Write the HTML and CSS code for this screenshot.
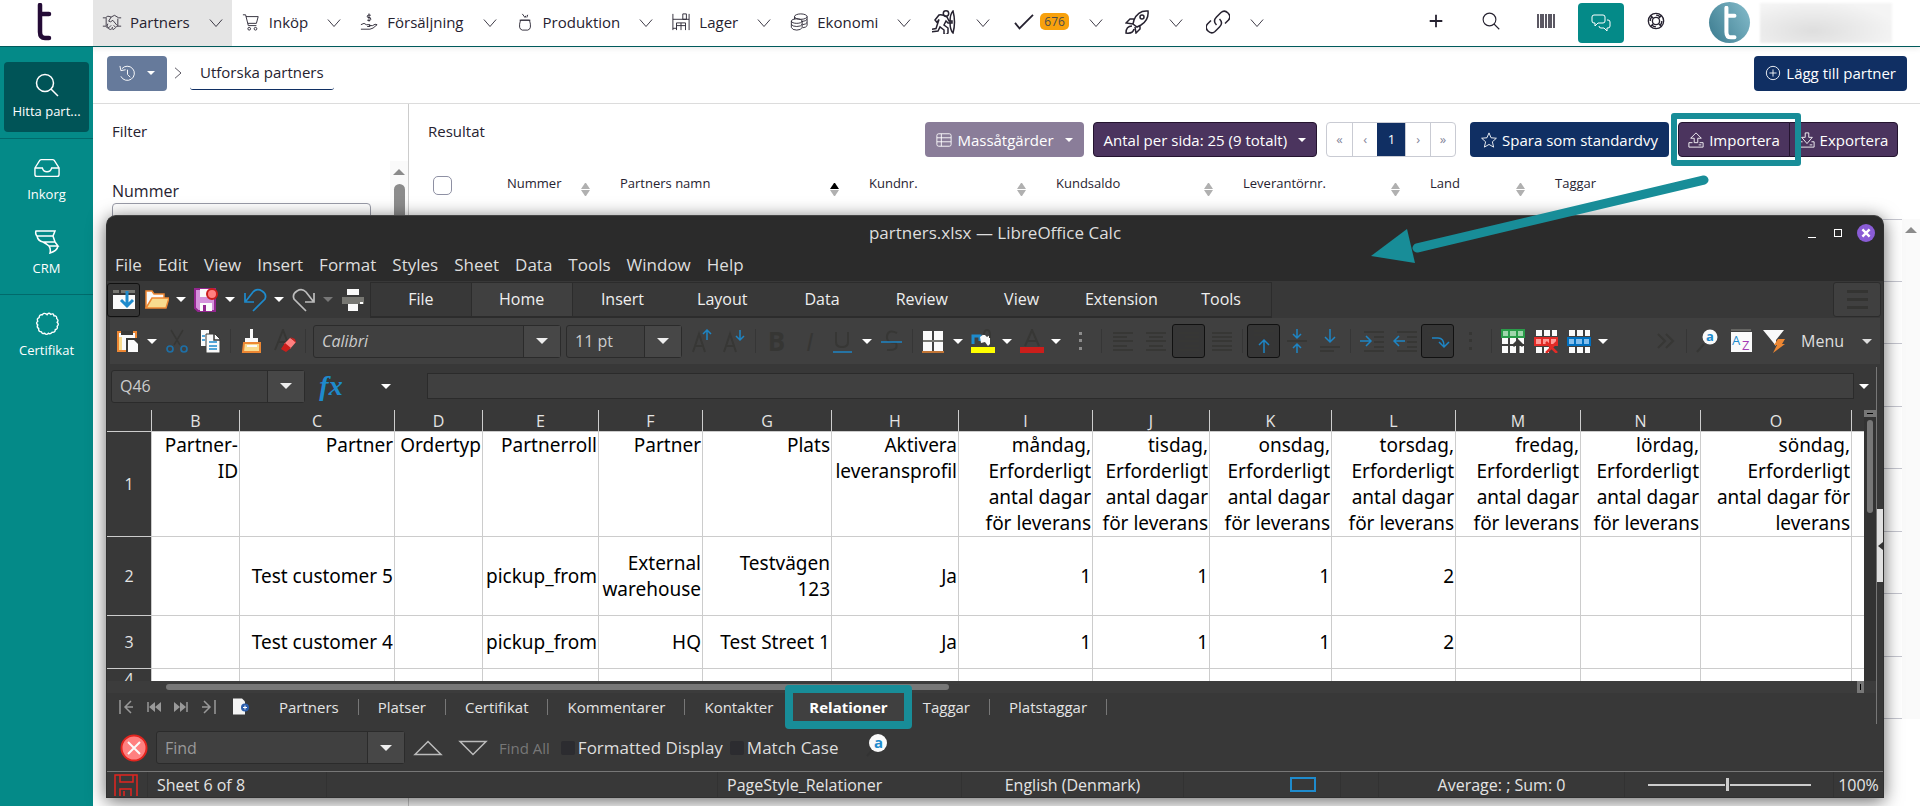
FILE: index.html
```html
<!DOCTYPE html>
<html lang="sv">
<head>
    <meta charset="utf-8">
    <title>Utforska partners</title>
    <link rel="stylesheet" href="styles.css">
</head>
<body>

<!-- icon sprite -->
<svg class="sprite" aria-hidden="true">
    <symbol id="chev" viewBox="0 0 16 16"><path d="M1 4l7 8 7-8"/></symbol>
    <symbol id="logo-t" viewBox="0 0 16 38"><path d="M4 2v27q0 6 5 6h4M4 11h9" stroke-width="4.500" stroke-linecap="round"/></symbol>
    <symbol id="handshake" viewBox="0 0 24 20"><path d="M1 5h3l3-2 4 1 4-2 5 3h3M1 15h3l4 3 2 1 2-1 2 1 2-2 2-2h5M5 5v10M19 6v9M11 4L8 9q2 2 5-1l5 6M14 14l2 2M12 16l1 1.500M7 12l-1 3 2 2 3-3"/></symbol>
    <symbol id="cart" viewBox="0 0 20 20"><path d="M1 2h3l3 12h9M4.500 4H18l-2 7.500H6.500"/><circle cx="8" cy="17.500" r="1.500"/><circle cx="15" cy="17.500" r="1.500"/></symbol>
    <symbol id="hand" viewBox="0 0 20 20"><path d="M1 18h10q3 0 8-5-2-1.500-5 1h-4M1 13q4-3 6 0h4v2H8M12 2.500q-4-1-4 1t2 1.500 2 2-4 1M10 .500v9"/></symbol>
    <symbol id="kettle" viewBox="0 0 20 20"><path d="M5 8q-3 10 2 11h6q5-1 2-11zM4 8h12M7 1l3 4 1-2M13 2l-1 3"/></symbol>
    <symbol id="store" viewBox="0 0 20 20"><path d="M1 1v18M19 1v18M1 7h18M12 1h4v6h-4zM5 19v-8h5v8M10 11h5v8M1 17h4M5 14h10"/></symbol>
    <symbol id="coins" viewBox="0 0 20 20"><ellipse cx="12" cy="4" rx="7" ry="3"/><path d="M5 4v3M19 4v10q-1 2-5 2.500M19 7q-1 2-6 2.500M19 10.500q-1 2-5 2.500"/><ellipse cx="7.500" cy="9" rx="6" ry="2.500"/><path d="M1.500 9v7q1 3 6 3t6-3V9M1.500 12.500q1 2.500 6 2.500t6-2.500"/></symbol>
    <symbol id="hiker" viewBox="0 0 24 24"><circle cx="14" cy="3.500" r="2.700"/><path d="M3 10l4-5q3-1 8 2l2 4h3v2h-4l-2-2-2 4 4 3v5l-2 2-2-1v-4l-4-3-2 4-7 1v-2.500l5-1 3-9-2 3zM21 1q3 11 0 22-3-3-3-11t3-11z"/></symbol>
    <symbol id="check" viewBox="0 0 24 20"><path d="M2 11l5 6L22 2" stroke-width="2"/></symbol>
    <symbol id="rocket" viewBox="0 0 24 24"><path d="M23 1q-10-1-14 9l-1 4 4 3 4-2q8-5 7-14zM9 9H5l-4 4 7 1M15 16v3l-4 4-1-6M7 16q-6 0-6 7 7 1 8-4"/><circle cx="17" cy="7" r="2"/></symbol>
    <symbol id="link" viewBox="0 0 24 24"><path d="M10.500 15q-4-4 0-8l4.500-4.500q3.500-3 7 .500t.500 7l-3.500 3.500M13.500 9q4 4 0 8L9 21.500q-3.500 3-7-.500t-.500-7L5 10.500"/></symbol>
    <symbol id="plus" viewBox="0 0 20 20"><path d="M10 3v14M3 10h14" stroke-width="2"/></symbol>
    <symbol id="search" viewBox="0 0 24 24"><circle cx="10" cy="10" r="8.500"/><path d="M16 16l7 7"/></symbol>
    <symbol id="barcode" viewBox="0 0 18 14"><path d="M1 0v14M4 0v14M6 0v14M9 0v14M12 0v14M14 0v14M17 0v14"/></symbol>
    <symbol id="chat" viewBox="0 0 20 20"><path d="M3 2h9q2 0 2 2v4q0 2-2 2H7l-3 3v-3H3q-2 0-2-2V4q0-2 2-2zM16 7h1q2 0 2 2v4q0 2-2 2h-1v3l-3-3h-3q-2 0-2-2"/></symbol>
    <symbol id="buoy" viewBox="0 0 20 20"><circle cx="10" cy="10" r="8.500"/><circle cx="10" cy="10" r="4"/><circle cx="10" cy="10" r="6.500" stroke-dasharray="5 5"/><path d="M4 4l3 3M16 4l-3 3M4 16l3-3M16 16l-3-3"/></symbol>
    <symbol id="inbox" viewBox="0 0 28 20"><path d="M1 10l5-8q1-1 2-1h12q1 0 2 1l5 8v7q0 2-2 2H3q-2 0-2-2zM1 10h8q1 4 5 4t5-4h8"/></symbol>
    <symbol id="crm" viewBox="0 0 24 24"><path d="M1 1h19l-2 5H2q-2-2-1-5zM2 6q1 5 6 6h12l-2-6M8 12q4 2 6 4h9l-3-4M14 16q2 3 1 7 7-2 8-7"/></symbol>
    <symbol id="badge" viewBox="0 0 26 26"><path d="M13 3q2-3 4-.500 3-1.500 3.500 1.500 3.500 0 3 3 2.500 2 .500 4 2.500 2.500 0 4.500 1 3-2 3.500 0 3.500-3.500 3-2 2.500-4 1-2 2.500-4 0-3 1-3.500-1.500-3.500 0-3-3.500-2.500-1.500-1-4-2.500-2 0-4-1.500-3 1.500-4 0-3.500 3.500-3 1.500-2.500 4-1z"/></symbol>
    <symbol id="history" viewBox="0 0 18 18"><path d="M3 4a7.500 7.500 0 1 1-1 8M1 1l1 5 5-1M9 5v5l3 3"/></symbol>
    <symbol id="grid" viewBox="0 0 18 16"><rect x="1" y="1" width="16" height="14" rx="2"/><path d="M1 5.500h16M1 10h16M6 1v14"/></symbol>
    <symbol id="star" viewBox="0 0 18 18"><path d="M9 1l2.300 5.500 6 .500-4.500 4 1.400 6L9 14l-5.200 3 1.400-6L.700 7l6-.500z"/></symbol>
    <symbol id="upload" viewBox="0 0 18 18"><path d="M7 12V7H3l6-6 6 6h-4v5zM5 12H1v5h16v-5h-4M12 14.500h3"/></symbol>
    <symbol id="download" viewBox="0 0 18 18"><path d="M7 1v5H3l6 7 6-7h-4V1zM4 11H1v6h16v-6h-3M12 14.500h3"/></symbol>
    <symbol id="pluscircle" viewBox="0 0 18 18"><circle cx="9" cy="9" r="7.500"/><path d="M9 5v8M5 9h8"/></symbol>
</svg>

<header class="topbar">
    <a href="#" class="logo" aria-label="Start"><svg><use href="#logo-t"/></svg></a>
    <nav class="topnav">
        <a href="#" class="active"><svg><use href="#handshake"/></svg>Partners<svg class="chev"><use href="#chev"/></svg></a>
        <a href="#"><svg><use href="#cart"/></svg>Inköp<svg class="chev"><use href="#chev"/></svg></a>
        <a href="#"><svg><use href="#hand"/></svg>Försäljning<svg class="chev"><use href="#chev"/></svg></a>
        <a href="#"><svg><use href="#kettle"/></svg>Produktion<svg class="chev"><use href="#chev"/></svg></a>
        <a href="#"><svg><use href="#store"/></svg>Lager<svg class="chev"><use href="#chev"/></svg></a>
        <a href="#"><svg><use href="#coins"/></svg>Ekonomi<svg class="chev"><use href="#chev"/></svg></a>
        <a href="#" class="icon-only" aria-label="Aktiviteter"><svg><use href="#hiker"/></svg><svg class="chev"><use href="#chev"/></svg></a>
        <a href="#" class="tasks"><svg><use href="#check"/></svg><span class="count">676</span><svg class="chev"><use href="#chev"/></svg></a>
        <a href="#" class="icon-only" aria-label="Projekt"><svg><use href="#rocket"/></svg><svg class="chev"><use href="#chev"/></svg></a>
        <a href="#" class="icon-only" aria-label="Länkar"><svg><use href="#link"/></svg><svg class="chev"><use href="#chev"/></svg></a>
    </nav>
    <div class="topicons">
        <button aria-label="Ny"><svg><use href="#plus"/></svg></button>
        <button aria-label="Sök"><svg><use href="#search"/></svg></button>
        <button aria-label="Streckkod"><svg><use href="#barcode"/></svg></button>
        <button class="chat" aria-label="Chatt"><svg><use href="#chat"/></svg></button>
        <button aria-label="Hjälp"><svg><use href="#buoy"/></svg></button>
    </div>
    <div class="user">
        <span class="avatar"><svg><use href="#logo-t"/></svg></span>
        <span class="username"></span>
    </div>
</header>

<div class="app">
    <aside class="sidebar">
        <div class="sidegroup">
            <a href="#" class="current"><svg><use href="#search"/></svg>Hitta part...</a>
        </div>
        <div class="sidegroup">
            <a href="#"><svg><use href="#inbox"/></svg>Inkorg</a>
            <a href="#"><svg><use href="#crm"/></svg>CRM</a>
        </div>
        <div class="sidegroup">
            <a href="#"><svg><use href="#badge"/></svg>Certifikat</a>
        </div>
    </aside>

    <main class="main">
        <div class="crumbs">
            <button class="btn history" aria-label="Historik"><svg><use href="#history"/></svg><i class="caret"></i></button>
            <svg class="sep"><use href="#chev"/></svg>
            <a href="#" class="crumb">Utforska partners</a>
            <button class="btn navy add"><svg><use href="#pluscircle"/></svg>Lägg till partner</button>
        </div>

        <div class="columns">
            <section class="filter">
                <h2>Filter</h2>
                <div class="filterbody">
                    <div class="field">
                        <label for="nummer">Nummer</label>
                        <input id="nummer" type="text">
                    </div>
                    <div class="track"><i class="arrowup"></i><i class="thumb"></i></div>
                </div>
            </section>

            <section class="result">
                <div class="resulthead">
                    <h2>Resultat</h2>
                    <div class="actions">
                        <button class="btn mass"><svg><use href="#grid"/></svg>Massåtgärder<i class="caret"></i></button>
                        <button class="btn purple">Antal per sida: 25 (9 totalt)<i class="caret"></i></button>
                        <div class="pages">
                            <a href="#">«</a><a href="#">‹</a><a href="#" class="on">1</a><a href="#">›</a><a href="#">»</a>
                        </div>
                        <button class="btn navy"><svg><use href="#star"/></svg>Spara som standardvy</button>
                        <div class="btngroup">
                            <button class="btn purple import"><svg><use href="#upload"/></svg>Importera</button>
                            <button class="btn purple export"><svg><use href="#download"/></svg>Exportera</button>
                        </div>
                    </div>
                </div>
                <div class="resultbody">
                    <table class="list">
                        <thead>
                            <tr>
                                <th class="c-check"><input type="checkbox" aria-label="Markera alla"></th>
                                <th class="c-num"><div>Nummer<i class="sort"></i></div></th>
                                <th class="c-name"><div>Partners namn<i class="sort up"></i></div></th>
                                <th class="c-mid"><div>Kundnr.<i class="sort"></i></div></th>
                                <th class="c-mid"><div>Kundsaldo<i class="sort"></i></div></th>
                                <th class="c-mid"><div>Leverantörnr.<i class="sort"></i></div></th>
                                <th class="c-land"><div>Land<i class="sort"></i></div></th>
                                <th><div>Taggar</div></th>
                            </tr>
                        </thead>
                        <tbody>
                            <tr><td colspan="8"></td></tr>
                            <tr><td colspan="8"></td></tr>
                            <tr><td colspan="8"></td></tr>
                            <tr><td colspan="8"></td></tr>
                            <tr><td colspan="8"></td></tr>
                            <tr><td colspan="8"></td></tr>
                            <tr><td colspan="8"></td></tr>
                            <tr><td colspan="8"></td></tr>
                        </tbody>
                    </table>
                    <div class="track outer"><i class="arrowup"></i></div>
                </div>
            </section>
        </div>
    </main>
</div>

<!-- LibreOffice window on top of the page -->
<div class="calc">
    <div class="titlebar">
        <span>partners.xlsx — LibreOffice Calc</span>
        <div class="winbtns">
            <button class="min" aria-label="Minimize"></button>
            <button class="max" aria-label="Maximize"></button>
            <button class="close" aria-label="Close"><svg viewBox="0 0 10 10"><path d="M2 2l6 6M8 2l-6 6"/></svg></button>
        </div>
    </div>

    <nav class="menubar">
        <a href="#">File</a><a href="#">Edit</a><a href="#">View</a><a href="#">Insert</a><a href="#">Format</a><a href="#">Styles</a><a href="#">Sheet</a><a href="#">Data</a><a href="#">Tools</a><a href="#">Window</a><a href="#">Help</a>
    </nav>

    <div class="ribbon">
        <div class="quick">
            <button class="tool pressed" aria-label="Toolbar"><svg viewBox="0 0 24 24"><path fill="#777772" d="M1 2h6v3H1zM9 2h14v3H9z"/><path fill="#fafafa" d="M1 7h22v14H1z"/><path d="M15 3v14M9 12l6 6 6-6" stroke="#1e8bcd" stroke-width="3" fill="none"/></svg></button>
            <button class="tool" aria-label="Open"><svg viewBox="0 0 24 24"><path fill="#fafafa" stroke="#ed8733" stroke-width="1.500" d="M1 20V3h6l2 3h10v4"/><path fill="#f8db8f" stroke="#ed8733" stroke-width="1.500" d="M1 20l6-10h17l-3 10z"/></svg></button>
            <button class="drop" aria-label="Open menu"><i class="caret"></i></button>
            <button class="tool" aria-label="Save"><svg viewBox="0 0 24 24"><path fill="#d492db" stroke="#92278f" stroke-width="2" d="M1 1h20v22H4l-3-3z"/><path fill="#fafafa" d="M6 1h10v8H6zM6 15h12v8H6z"/><path fill="#92278f" d="M9 17h3v6H9z"/><circle cx="18" cy="6" r="5" fill="#ff8080" stroke="#cb1e1b" stroke-width="2"/></svg></button>
            <button class="drop" aria-label="Save menu"><i class="caret"></i></button>
            <button class="tool" aria-label="Undo"><svg viewBox="0 0 24 24"><path fill="none" stroke="#1e8bcd" stroke-width="1.700" d="M2 5v9h9M3 13L10 4q4-4 9-1t3 8L10 23"/></svg></button>
            <button class="drop" aria-label="Undo menu"><i class="caret"></i></button>
            <button class="tool" aria-label="Redo"><svg viewBox="0 0 24 24"><path fill="none" stroke="#bdbdbd" stroke-width="1.700" d="M22 5v9h-9M21 13L14 4q-4-4-9-1t-3 8l12 12"/></svg></button>
            <button class="drop" aria-label="Redo menu"><i class="caret dim"></i></button>
            <button class="tool" aria-label="Print"><svg viewBox="0 0 24 24"><path fill="#fafafa" d="M6 1h12v6H6zM7 16h10v7H7z"/><path fill="#777772" d="M1 9h22v7H1z"/><path fill="#fff" d="M19 14h3v2h-3z"/></svg></button>
        </div>
        <div class="tabs">
            <button>File</button><button class="on">Home</button><button>Insert</button><button>Layout</button><button>Data</button><button>Review</button><button>View</button><button>Extension</button><button>Tools</button>
        </div>
        <button class="burger" aria-label="Menu"><i></i><i></i><i></i></button>
    </div>

    <div class="toolbar">
        <button class="tool" aria-label="Paste"><svg viewBox="0 0 24 24"><path fill="#fafafa" stroke="#ed8733" stroke-width="2" d="M2 3h18v19H2z"/><path fill="#f8db8f" d="M3 8h3v13H3z"/><path fill="#3a3a38" d="M5 2h12v4H5zM10 9h14v14H10z"/><path fill="#fafafa" d="M12 11h6l4 4v8H12z"/></svg></button>
        <button class="drop" aria-label="Paste menu"><i class="caret"></i></button>
        <button class="tool" aria-label="Cut"><svg viewBox="0 0 24 24"><path fill="none" stroke="#363634" stroke-width="1.500" d="M6 1l9 15M18 1L9 16"/><circle cx="5" cy="20" r="3" fill="none" stroke="#1e6fa5" stroke-width="1.700"/><circle cx="19" cy="20" r="3" fill="none" stroke="#1e6fa5" stroke-width="1.700"/></svg></button>
        <button class="tool" aria-label="Copy"><svg viewBox="0 0 24 24"><path fill="#fafafa" d="M3 1h8v16H3z"/><path fill="#fafafa" stroke="#3a3a38" d="M8 5h9l5 5v14H8z"/><path stroke="#1e8bcd" stroke-width="1.500" d="M4 7h3M4 11h3M11 13h8M11 17h8M11 20h8"/><path fill="none" stroke="#3a3a38" stroke-width="1.500" d="M16 5v6h6"/></svg></button>
        <i class="bar"></i>
        <button class="tool" aria-label="Clone formatting"><svg viewBox="0 0 24 24"><path fill="#fafafa" d="M10 0h3v9h5v4H5V9h5z"/><path fill="#f8db8f" stroke="#ed8733" stroke-width="2" d="M4 14h16v9H3z"/><path stroke="#fafafa" stroke-width="2" d="M7 17h10"/></svg></button>
        <button class="tool" aria-label="Clear formatting"><svg viewBox="0 0 24 24"><path fill="none" stroke="#363634" stroke-width="2" d="M2 21L10 1l6 16M5 13h8"/><path fill="#ff8080" d="M17 9l6 4-6 7-6-5z"/><path fill="#cb1e1b" d="M12 14l6 5-5 4-5-3zM17 8l5 2 1 4z"/></svg></button>
        <i class="bar"></i>
        <div class="combo font"><input type="text" value="Calibri" aria-label="Font name"><button aria-label="Fonts"><i class="caret"></i></button></div>
        <div class="combo size"><input type="text" value="11 pt" aria-label="Font size"><button aria-label="Sizes"><i class="caret"></i></button></div>
        <button class="tool" aria-label="Increase size"><svg viewBox="0 0 24 24"><path class="off" d="M3 23L9 5l6 18M5 17h9"/><path class="blue" d="M17 11V1M13 5l4-4 4 4"/></svg></button>
        <button class="tool" aria-label="Decrease size"><svg viewBox="0 0 24 24"><path class="off" d="M1 23L7 5l6 18M3 17h9"/><path class="blue" d="M17 1v10M13 7l4 4 4-4"/></svg></button>
        <i class="bar"></i>
        <button class="tool glyph"><b>B</b></button>
        <button class="tool glyph"><em>I</em></button>
        <button class="tool" aria-label="Underline"><svg viewBox="0 0 24 24"><path class="off" d="M5 3v10q0 5 6 5t6-5V3"/><path class="blue" d="M2 23h19" /></svg></button>
        <button class="drop" aria-label="Underline menu"><i class="caret"></i></button>
        <button class="tool" aria-label="Strikethrough"><svg viewBox="0 0 24 24"><path class="off" d="M17 4q-9-4-10 3t9 7q3 8-9 7"/><path class="blue" d="M1 13h21"/></svg></button>
        <i class="bar"></i>
        <button class="tool" aria-label="Borders"><svg viewBox="0 0 24 24"><path fill="#fafafa" d="M1 2h9v9H1zM12 2h9v9h-9zM1 13h9v9H1zM12 13h9v9h-9z"/><path stroke="#777772" stroke-width="2" d="M1 12h20"/><path stroke="#ed8733" stroke-width="1.500" d="M0 23h22"/></svg></button>
        <button class="drop" aria-label="Borders menu"><i class="caret"></i></button>
        <button class="tool" aria-label="Background"><svg viewBox="0 0 24 24"><path fill="none" stroke="#1e8bcd" stroke-width="3" d="M2 15V7h7v5"/><path fill="#fafafa" d="M9 8l4-3 3 3 3-2v9l-2 2-3-4-4 1z"/><path class="off" d="M13 6q0-5 3-5t3 5v3"/><path fill="#ff0" d="M0 18h24v6H0z"/></svg></button>
        <button class="drop" aria-label="Background menu"><i class="caret"></i></button>
        <button class="tool" aria-label="Font color"><svg viewBox="0 0 24 24"><path class="off" d="M5 17L12 1l7 16M7 12h10"/><path fill="#cb1e1b" d="M0 18h24v6H0z"/></svg></button>
        <button class="drop" aria-label="Font color menu"><i class="caret"></i></button>
        <button class="tool" aria-label="More"><svg viewBox="0 0 24 24"><path fill="#8c8c8c" d="M10 3h3v3h-3zM10 10h3v3h-3zM10 18h3v3h-3z"/></svg></button>
        <i class="bar"></i>
        <button class="tool" aria-label="Left"><svg viewBox="0 0 24 24"><path class="off" d="M2 4h20M2 8h14M2 12h20M2 17h14M2 21h20"/></svg></button>
        <button class="tool" aria-label="Center"><svg viewBox="0 0 24 24"><path class="off" d="M2 4h20M5 8h14M2 12h20M5 17h14M2 21h20"/></svg></button>
        <button class="tool pressed" aria-label="Right"><svg viewBox="0 0 24 24"><path class="off" d="M2 4h20M8 8h14M2 12h20M8 17h14M2 21h20"/></svg></button>
        <button class="tool" aria-label="Justify"><svg viewBox="0 0 24 24"><path class="off" d="M2 4h20M2 8h20M2 12h20M2 17h20M2 21h20"/></svg></button>
        <i class="bar"></i>
        <button class="tool pressed" aria-label="Top"><svg viewBox="0 0 24 24"><path class="off" d="M2 2h20M2 6h14"/><path class="blue" d="M12 24V11M7 16l5-5 5 5"/></svg></button>
        <button class="tool" aria-label="Middle"><svg viewBox="0 0 24 24"><path class="off" d="M2 12h20"/><path class="blue" d="M12 0v9M8 5l4 4 4-4M12 24v-9M8 19l4-4 4 4"/></svg></button>
        <button class="tool" aria-label="Bottom"><svg viewBox="0 0 24 24"><path class="off" d="M2 18h20M2 22h14"/><path class="blue" d="M12 0v13M7 8l5 5 5-5"/></svg></button>
        <i class="bar"></i>
        <button class="tool" aria-label="Indent"><svg viewBox="0 0 24 24"><path class="off" d="M4 3h20M14 8h10M14 13h10M14 18h10M4 22h20"/><path class="blue" d="M0 12h11M6 7l5 5-5 5"/></svg></button>
        <button class="tool" aria-label="Outdent"><svg viewBox="0 0 24 24"><path class="off" d="M4 3h20M14 8h10M14 13h10M14 18h10M4 22h20"/><path class="blue" d="M12 12H1M6 7l-5 5 5 5"/></svg></button>
        <button class="tool pressed" aria-label="Wrap"><svg viewBox="0 0 24 24"><path class="off" d="M2 2h20M2 6h14"/><path class="blue" d="M6 9h6q6 0 6 8M13 13l5 5 5-5"/></svg></button>
        <button class="tool" aria-label="More"><svg viewBox="0 0 24 24"><path fill="#363634" d="M10 3h3v3h-3zM10 10h3v3h-3zM10 18h3v3h-3z"/></svg></button>
        <i class="bar"></i>
        <button class="tool" aria-label="Insert row"><svg viewBox="0 0 24 24"><path fill="#fafafa" d="M1 9h6v6H1zM9 9h6v6H9zM17 9h6v6h-6zM1 17h6v7H1zM9 17h6v7H9zM17 17h6v7h-6z"/><path fill="#9fd6ac" stroke="#2a9d4a" stroke-width="2" d="M1 1h22v7H1zM8 1v7M16 1v7"/><path fill="none" stroke="#3a3a38" stroke-width="3" d="M17 24V13M12 17l5-5 5 5"/></svg></button>
        <button class="tool" aria-label="Delete row"><svg viewBox="0 0 24 24"><path fill="#fafafa" d="M2 1h6v6H2zM10 1h6v6h-6zM18 1h5v6h-5zM2 18h6v6H2zM10 18h5v6h-5z"/><path fill="#ff9a97" stroke="#e22b27" stroke-width="2" d="M1 9h22v7H1zM8 9v7M16 9v7"/><path stroke="#e22b27" stroke-width="2.500" d="M12 13l11 11M23 13L12 24"/></svg></button>
        <button class="tool" aria-label="Select row"><svg viewBox="0 0 24 24"><path fill="#fafafa" d="M2 1h6v6H2zM10 1h6v6h-6zM18 1h5v6h-5zM2 18h6v6H2zM10 18h6v6h-6zM18 18h5v6h-5z"/><path fill="#83beec" stroke="#0070c0" stroke-width="2" d="M1 9h22v7H1zM8 9v7M16 9v7"/></svg></button>
        <button class="drop" aria-label="Select menu"><i class="caret"></i></button>
        <div class="rightside">
            <button class="tool" aria-label="Overflow"><svg viewBox="0 0 24 24"><path class="off" d="M4 5l7 7-7 7M12 5l7 7-7 7"/></svg></button>
            <i class="bar"></i>
            <button class="tool" aria-label="Find"><svg viewBox="0 0 24 24"><path class="off" d="M8 15l-7 8"/><circle cx="14" cy="8" r="7.500" fill="#fafafa"/><text x="10" y="12" fill="#1e8bcd" font-size="13" font-weight="700">a</text></svg></button>
            <button class="tool" aria-label="Sort"><svg viewBox="0 0 24 24"><path stroke="#8c8c86" d="M2 1h20"/><path fill="#fafafa" d="M2 3h21v20H2z"/><text x="3" y="16" fill="#1e8bcd" font-size="13">A</text><text x="13" y="21" fill="#a33ab5" font-size="13">Z</text></svg></button>
            <button class="tool" aria-label="Filter"><svg viewBox="0 0 24 24"><path fill="#fafafa" d="M1 1h21l-8 10v6l-4-5z"/><path fill="#ed8733" d="M16 10h7l-3 5h3L11 24l4-8h-3z"/></svg></button>
            <button class="menubtn">Menu<i class="caret"></i></button>
        </div>
    </div>

    <div class="workarea">
        <div class="work">
            <div class="formula">
                <div class="combo name"><input type="text" value="Q46" aria-label="Name box"><button aria-label="Names"><i class="caret"></i></button></div>
                <button class="fx" aria-label="Function wizard"><em>fx</em></button>
                <button class="drop" aria-label="Functions"><i class="caret"></i></button>
                <input class="line" type="text" aria-label="Input line">
                <button class="drop" aria-label="Expand"><i class="caret"></i></button>
            </div>

            <div class="sheetrow">
                <div class="sheet">
                    <table class="cells">
                        <colgroup>
                            <col class="w45"><col class="w88"><col class="w155"><col class="w88"><col class="w116"><col class="w104"><col class="w129"><col class="w127"><col class="w134"><col class="w117"><col class="w122"><col class="w124"><col class="w125"><col class="w120"><col class="w151"><col>
                        </colgroup>
                        <thead>
                            <tr><th></th><th>B</th><th>C</th><th>D</th><th>E</th><th>F</th><th>G</th><th>H</th><th>I</th><th>J</th><th>K</th><th>L</th><th>M</th><th>N</th><th>O</th><th></th></tr>
                        </thead>
                        <tbody>
                            <tr class="r1"><th>1</th><td>Partner-<br>ID</td><td>Partner</td><td>Ordertyp</td><td>Partnerroll</td><td>Partner</td><td>Plats</td><td>Aktivera<br>leveransprofil</td><td>måndag,<br>Erforderligt<br>antal dagar<br>för leverans</td><td>tisdag,<br>Erforderligt<br>antal dagar<br>för leverans</td><td>onsdag,<br>Erforderligt<br>antal dagar<br>för leverans</td><td>torsdag,<br>Erforderligt<br>antal dagar<br>för leverans</td><td>fredag,<br>Erforderligt<br>antal dagar<br>för leverans</td><td>lördag,<br>Erforderligt<br>antal dagar<br>för leverans</td><td>söndag,<br>Erforderligt<br>antal dagar för<br>leverans</td><td></td></tr>
                            <tr class="r2"><th>2</th><td></td><td>Test customer 5</td><td></td><td>pickup_from</td><td>External<br>warehouse</td><td>Testvägen<br>123</td><td>Ja</td><td>1</td><td>1</td><td>1</td><td>2</td><td></td><td></td><td></td><td></td></tr>
                            <tr class="r3"><th>3</th><td></td><td>Test customer 4</td><td></td><td>pickup_from</td><td>HQ</td><td>Test Street 1</td><td>Ja</td><td>1</td><td>1</td><td>1</td><td>2</td><td></td><td></td><td></td><td></td></tr>
                            <tr class="r4"><th>4</th><td></td><td></td><td></td><td></td><td></td><td></td><td></td><td></td><td></td><td></td><td></td><td></td><td></td><td></td><td></td></tr>
                        </tbody>
                    </table>
                </div>
                <div class="vscroll"><i class="split"></i><i class="thumb"></i></div>
            </div>
            <div class="hscroll"><i class="thumb"></i><i class="split"></i></div>

            <div class="sheettabs">
                <div class="tabnav">
                    <button aria-label="First"><svg viewBox="0 0 16 16"><path d="M1 1v14M12 2L6 8l6 6M14 8H7"/></svg></button>
                    <button aria-label="Previous"><svg viewBox="0 0 16 16"><path d="M2 3v10" /><path class="fill" d="M9 3v10L3 8zM15 3v10L9 8z"/></svg></button>
                    <button aria-label="Next"><svg viewBox="0 0 16 16"><path d="M14 3v10"/><path class="fill" d="M1 3v10l6-5zM7 3v10l6-5z"/></svg></button>
                    <button aria-label="Last"><svg viewBox="0 0 16 16"><path d="M15 1v14M4 2l6 6-6 6M2 8h7"/></svg></button>
                </div>
                <button class="addsheet" aria-label="Add sheet"><svg viewBox="0 0 16 16"><path fill="#f4f4f4" d="M0 0h9l3 3v13H0z"/><circle cx="12" cy="9" r="4" fill="#2a5caa"/><path stroke="#fff" d="M12 7v4M10 9h4"/></svg></button>
                <a href="#">Partners</a><a href="#">Platser</a><a href="#">Certifikat</a><a href="#">Kommentarer</a><a href="#" class="before">Kontakter</a><a href="#" class="on">Relationer</a><a href="#">Taggar</a><a href="#">Platstaggar</a>
            </div>
        </div>
        <div class="deck"><button aria-label="Show sidebar"></button></div>
    </div>

    <div class="findbar">
        <button class="stop" aria-label="Close find bar"><svg viewBox="0 0 28 28"><circle cx="14" cy="14" r="12.500" fill="#ff8080" stroke="#e2251f" stroke-width="2"/><path stroke="#fafafa" stroke-width="2" d="M8 8l12 12M20 8L8 20"/></svg></button>
        <div class="combo find"><input type="text" placeholder="Find" aria-label="Find"><button aria-label="History"><i class="caret"></i></button></div>
        <button class="tri" aria-label="Find previous"><svg viewBox="0 0 30 16"><path d="M2 14.500L15 1.500l13 13z"/></svg></button>
        <button class="tri" aria-label="Find next"><svg viewBox="0 0 30 16"><path d="M2 1.500l13 13 13-13z"/></svg></button>
        <button class="all" disabled>Find All</button>
        <label><input type="checkbox">Formatted Display</label>
        <label><input type="checkbox">Match Case</label>
        <button class="tool" aria-label="Find and replace"><svg viewBox="0 0 24 24"><path d="M8 15l-7 8" stroke="#333" stroke-width="2"/><circle cx="12" cy="10" r="9" fill="#fafafa"/><text x="8" y="15" fill="#1e8bcd" font-size="15" font-weight="700">a</text></svg></button>
    </div>

    <footer class="status">
        <span><svg viewBox="0 0 24 22"><path d="M1 22V1h22v21M6 1v7h13V1M6 22v-7h11v7M10 17v5"/></svg></span>
        <span class="left">Sheet 6 of 8</span>
        <span></span>
        <span class="left">PageStyle_Relationer</span>
        <span>English (Denmark)</span>
        <span class="right"><i class="selmode"></i></span>
        <span></span>
        <span>Average: ; Sum: 0</span>
        <span><input type="range" min="0" max="100" value="49" aria-label="Zoom"></span>
        <span>100%</span>
    </footer>
</div>

<!-- arrow from the import button to the window -->
<svg class="pointer" viewBox="0 0 344 96"><path d="M333 10L46 78" stroke-width="9" stroke-linecap="round"/><path class="head" d="M0 86l36-27 8 34z"/></svg>

</body>
</html>
```

FILE: styles.css
```css
* { box-sizing: border-box; }

body {
    margin: 0;
    min-height: 100vh;
    display: flex;
    flex-direction: column;
    position: relative;
    overflow: hidden;
    font-family: "Open Sans", "Noto Sans", sans-serif;
    font-size: 15px;
    color: #262230;
    background: #fff;
}

a { color: inherit; text-decoration: none; }
button, input { font: inherit; color: inherit; }
button { background: none; border: 0; padding: 0; display: flex; align-items: center; justify-content: center; }
h2 { margin: 0; font-size: 15px; font-weight: 400; }
svg { fill: none; stroke: currentColor; flex: none; }
.sprite { position: absolute; width: 0; height: 0; }

.caret {
    border: 5px solid transparent;
    border-top-color: currentColor;
    border-bottom: 0;
}
.caret.dim { border-top-color: #777; }

/* top bar */
.topbar {
    display: flex;
    height: 47px;
    border-bottom: 1px solid #005a5c;
    box-shadow: 0 1px 6px rgba(0, 0, 0, .1);
}
.logo { width: 93px; display: flex; align-items: center; justify-content: center; padding: 0 6px 2px 0; color: #240b36; }
.logo svg { width: 16px; height: 38px; }
.topnav { display: flex; }
.topnav a { display: flex; align-items: center; padding: 0 9px 3px 9px; }
.topnav a.active { background: #e5e5e5; }
.topnav svg { width: 20px; height: 18px; margin-right: 8px; }
.topnav .chev { width: 14px; height: 14px; margin: 2px 0 0 19px; }
.topnav .icon-only svg { width: 24px; height: 24px; margin: 0; stroke-width: 1.500; }
.topnav .icon-only .chev, .topnav .tasks .chev { width: 14px; height: 14px; margin: 2px 0 0 20px; stroke-width: 1; }
.topnav .icon-only { padding-left: 12px; padding-right: 11px; }
.topnav .tasks { padding-left: 12px; padding-right: 10px; }
.topnav .tasks svg { width: 22px; margin-right: 5px; }
.count { background: #f8a10d; color: #4b4b4b; border-radius: 5px; padding: 0 4px; font-size: 12px; line-height: 17px; }
.topicons { display: flex; align-items: center; margin-left: auto; margin-right: 30px; gap: 9px; }
.topicons button { width: 46px; height: 40px; border-radius: 4px; margin-bottom: 5px; }
.topicons svg { width: 18px; height: 18px; stroke-width: 1.500; }
.topicons .chat { background: #048a88; color: #fff; margin-bottom: 0; }
.topicons .chat svg { width: 20px; height: 20px; stroke-width: 1; }
.user { display: flex; align-items: center; gap: 10px; margin-right: 28px; padding-bottom: 1px; }
.avatar {
    width: 41px; height: 41px;
    border-radius: 50%;
    display: flex; align-items: center; justify-content: center;
    color: #fff;
    background: linear-gradient(60deg, #3a7a8e, #86bdcc);
}
.avatar svg { width: 16px; height: 34px; }
.username { width: 132px; height: 40px; background: radial-gradient(at 40% 70%, #dedede, #f4f4f4 75%); filter: blur(1px); }

/* left menu */
.app { flex: 1; display: flex; }
.sidebar { width: 93px; background: #048a88; color: #fff; font-size: 13px; }
.sidegroup { border-bottom: 1px solid #016a6b; padding: 15px 4px 6px; }
.sidegroup + .sidegroup { padding-bottom: 12px; }
.sidegroup:last-child { border: 0; }
.sidebar a {
    display: flex; flex-direction: column; align-items: center; gap: 5px;
    height: 70px; padding-top: 11px;
    border-radius: 4px;
    line-height: 18px;
}
.sidegroup + .sidegroup a { padding-top: 2px; height: 74px; }
.sidegroup + .sidegroup a + a { height: 54px; }
.sidebar a.current { background: #005457; }
.sidebar svg { width: 26px; height: 24px; stroke-width: 1.500; }

/* page */
.main { flex: 1; display: flex; flex-direction: column; min-width: 0; }
.crumbs { display: flex; align-items: center; height: 57px; padding: 0 13px 4px 14px; border-bottom: 1px solid #dcdcdc; }
.btn {
    height: 35px;
    padding: 0 10px;
    gap: 5px;
    border-radius: 4px;
    border: 1px solid transparent;
    color: #fff;
    white-space: nowrap;
}
.btn svg { width: 16px; height: 16px; }
.btn .caret { margin-left: 6px; border-width: 4px; border-bottom: 0; }
.navy { background: #102f63; }
.purple { background: #4b345e; border-color: #24142f; }
.mass { background: #8a7d99; }
.history { width: 60px; background: #667a9b; padding: 0; }
.history svg { width: 17px; height: 17px; }
.crumbs .sep { width: 12px; height: 12px; margin: 0 6px 0 5px; transform: rotate(-90deg); }
.crumb { padding: 4px 10px 5px; line-height: 24px; border-bottom: 1px solid #102f63; border-radius: 3px; }
.add { margin-left: auto; }

.columns { flex: 1; display: flex; }
.filter { width: 316px; border-right: 1px solid #ccc; padding-top: 16px; }
.filter h2, .filter .field { margin-left: 19px; }
.filterbody { display: flex; justify-content: space-between; margin-top: 19px; }
.filter h2 { line-height: 22px; }
.field { width: 259px; margin-top: 18px; font-size: 16px; }
.field label { display: block; line-height: 24px; }
.field input { width: 100%; height: 34px; border: 1px solid #9a9ca8; border-radius: 4px; }
.track { width: 18px; background: #fafafa; height: 500px; display: flex; flex-direction: column; align-items: center; padding-top: 8px; }
.arrowup { border: 6px solid transparent; border-bottom-color: #8b8b8b; border-top: 0; }
.track .thumb { width: 11px; height: 90px; margin-top: 9px; border-radius: 6px; background: #8b8b8b; }

.result { flex: 1; display: flex; flex-direction: column; }
.resulthead { display: flex; justify-content: space-between; padding: 16px 22px 0 19px; }
.resulthead h2 { line-height: 22px; }
.actions { display: flex; gap: 9px; padding-top: 2px; }
.pages { display: flex; border: 1px solid #c9cbd3; border-radius: 4px; font-size: 13px; color: #84869a; margin-right: 5px; }
.pages a { width: 25px; line-height: 33px; text-align: center; border-left: 1px solid #c9cbd3; }
.pages a:first-child { border-left: 0; }
.pages .on { background: #102f63; color: #fff; width: 28px; border-color: #102f63; }
.btngroup { display: flex; }
.import { position: relative; border-radius: 4px 0 0 4px; width: 112px; }
.export { border-radius: 0 4px 4px 0; width: 109px; padding: 0; margin-left: -1px; }
.import::after {
    content: "";
    position: absolute;
    z-index: 1;
    inset: -10px -12px -10px -8px;
    border: 6px solid #188d98;
    border-radius: 3px;
}
.resultbody { display: flex; }
.list { flex: 1; border-collapse: collapse; table-layout: fixed; font-size: 13px; }
.list th { font-weight: 400; text-align: left; padding: 0; height: 62px; border-bottom: 1px solid #c5c6cf; vertical-align: top; }
.list th > div { display: flex; justify-content: space-between; padding: 16px 30px 0 0; line-height: 20px; }
.list td { height: 48px; border-bottom: 1px solid #c5c6cf; padding: 0; }
.c-check { width: 98px; }
.list .c-check { padding: 19px 0 0 24px; }
.list input { appearance: none; display: block; margin: 0; width: 19px; height: 19px; border: 1px solid #8e90a3; border-radius: 5px; }
.c-num { width: 113px; }
.c-name { width: 249px; }
.c-mid { width: 187px; }
.c-land { width: 125px; }
.sort { width: 9px; margin-top: 10px; }
.sort::before, .sort::after { content: ""; display: block; border: 4px solid transparent; }
.sort::before { border-top: 0; border-bottom: 6px solid #b0b0b0; margin-bottom: 1px; }
.sort::after { border-bottom: 0; border-top: 6px solid #b0b0b0; }
.sort.up::before { border-bottom-color: #000; }
.track.outer { margin-top: 62px; }

/* LibreOffice window */
.calc {
    position: absolute;
    top: 215px; bottom: 8px; left: 106px; right: 36px;
    display: flex;
    flex-direction: column;
    background: #383838;
    color: #dedede;
    font-size: 16px;
    border: 1px solid #303030;
    border-top-color: #444;
    border-radius: 10px 10px 0 0;
    box-shadow: 0 3px 18px rgba(0, 0, 0, .6);
    overflow: hidden;
}
.titlebar { height: 33px; background: #2b2b2b; display: grid; grid-template-columns: 1fr auto 1fr; align-items: center; font-size: 17px; }
.titlebar span { grid-column: 2; }
.winbtns { display: flex; align-items: center; justify-content: flex-end; gap: 18px; padding-right: 8px; }
.min { width: 8px; height: 10px; border-bottom: 1px solid #fff; }
.max { width: 8px; height: 8px; border: 1px solid #fff; }
.close { width: 18px; height: 18px; border-radius: 50%; background: #8a5cd6; color: #fff; margin-left: -3px; }
.close svg { width: 12px; height: 12px; stroke-width: 2; }
.menubar { background: #2b2b2b; height: 32px; display: flex; align-items: center; gap: 16px; padding: 0 0 1px 8px; font-size: 17px; }

.ribbon { display: flex; height: 37px; align-items: center; }
.quick { display: flex; }
.tool { width: 33px; height: 34px; color: #fff; }
.tool svg { width: 24px; height: 24px; stroke: none; }
.tool .off { stroke: #373735; stroke-width: 2; fill: none; }
.tool .blue { stroke: #1e85c4; stroke-width: 1.500; fill: none; }
.drop { width: 16px; height: 34px; color: #fff; }
.pressed { border: 1px solid #111; border-radius: 3px; background: #363636; }
.glyph { color: #363634; font-size: 26px; }
.tabs { display: flex; width: 902px; height: 36px; margin-left: 1px; border: 1px solid #2c2c2c; border-bottom-width: 2px; }
.tabs button { flex: 1; color: #efefef; }
.tabs .on { background: #404040; border: 1px solid #2c2c2c; border-width: 0 1px; }
.burger { margin-left: auto; margin-right: 2px; width: 48px; height: 35px; flex-direction: column; gap: 5px; background: #404040; border: 1px solid #2c2c2c; border-radius: 3px; }
.burger i { width: 21px; height: 3px; background: #343432; }

.toolbar { display: flex; align-items: center; height: 46px; margin: 0 3px; padding-left: 1px; background: #404040; }
.bar { width: 9px; height: 24px; border-left: 1px solid #363636; margin-left: 4px; margin-right: -4px; }
.combo { display: flex; height: 33px; border: 1px solid #2b2b2b; border-radius: 3px; background: #404040; color: #ccc; }
.combo input { flex: 1; min-width: 0; border: 0; outline: 0; background: none; padding: 0 8px; }
.combo input::placeholder { color: #999; }
.combo button { width: 37px; background: #474747; border-left: 1px solid #2b2b2b; color: #eee; }
.combo .caret { border-width: 6px; border-bottom: 0; }
.font { width: 248px; margin: 0 5px 0 3px; font-style: italic; }
.size { width: 116px; margin-right: 3px; }
.rightside { display: flex; align-items: center; margin-left: auto; }
.menubtn { gap: 18px; margin: 0 7px 0 11px; }
.rightside .menubtn { margin-right: 8px; }

.workarea { flex: 1; display: flex; min-height: 0; }
.work { flex: 1; display: flex; flex-direction: column; min-width: 0; }
.formula { display: flex; align-items: center; height: 46px; padding: 0 4px 2px; }
.name { width: 194px; }
.fx { width: 52px; color: #1e8bcd; font: 28px/1 "Liberation Serif", serif; font-weight: 700; }
.formula .drop { margin-left: 21px; }
.line { flex: 1; height: 26px; margin-left: 33px; background: #404040; border: 1px solid #2b2b2b; border-radius: 0; }
.formula .line + .drop { margin-left: 2px; }

.sheetrow { flex: 1; display: flex; min-height: 0; }
.sheet { flex: 1; overflow: hidden; background: #fff; }
.cells { width: 100%; table-layout: fixed; border-collapse: separate; border-spacing: 0; color: #000; font: 19px/26px "Noto Sans", sans-serif; }
.cells th { background: #383838; color: #e4e4e4; font: 16px/20px "Open Sans", sans-serif; border-bottom: 1px solid #ccc; padding: 0; border-right: 1px solid #ccc; text-align: center; }
.cells td { border: 1px solid #ccc; border-width: 0 1px 1px 0; text-align: right; padding: 0 1px 0 0; white-space: nowrap; }
.cells tr > :last-child { border-right: 0; }
.cells thead th { height: 22px; }
.r1 td { height: 105px; vertical-align: top; }
.r2 td { height: 79px; }
.r3 td { height: 53px; }
.w45 { width: 45px; }
.w88 { width: 88px; }
.w104 { width: 104px; }
.w116 { width: 116px; }
.w117 { width: 117px; }
.w120 { width: 120px; }
.w122 { width: 122px; }
.w124 { width: 124px; }
.w125 { width: 125px; }
.w127 { width: 127px; }
.w129 { width: 129px; }
.w134 { width: 134px; }
.w151 { width: 151px; }
.w155 { width: 155px; }

.vscroll { width: 12px; background: #333; display: flex; flex-direction: column; align-items: center; gap: 3px; }
.vscroll .split { width: 12px; height: 7px; background: #000; border: 3px solid #777; }
.vscroll .thumb { width: 6px; height: 93px; border-radius: 3px; background: #777; }
.hscroll { height: 12px; display: flex; align-items: center; justify-content: space-between; padding: 0 12px 0 59px; background: #3c3c3c; }
.hscroll .thumb { width: 783px; height: 6px; border-radius: 3px; background: #777; }
.hscroll .split { width: 7px; height: 12px; background: #000; border: 3px solid #777; }

.sheettabs { display: flex; align-items: center; height: 31px; padding: 0 0 4px 12px; color: #e4e4e4; }
.tabnav { display: flex; gap: 11px; color: #999; }
.tabnav svg { width: 16px; height: 16px; stroke-width: 1.500; }
.tabnav .fill { fill: #999; stroke: none; }
.addsheet { margin: 0 11px 0 17px; }
.addsheet svg { width: 16px; height: 17px; stroke: none; }
.sheettabs a { padding: 0 19px; line-height: 16px; border-right: 1px solid #777; font-size: 15px; }
.sheettabs .before { border-color: transparent; }
.sheettabs .on { position: relative; padding: 0 16px; line-height: 28px; font-weight: 700; color: #fff; background: #404040; border: 0; }
.sheettabs .on::after {
    content: "";
    position: absolute;
    inset: -8px;
    border: 8px solid #188d98;
    border-radius: 4px;
}
.deck { width: 7px; margin-top: 3px; border-left: 1px solid #777; display: flex; align-items: center; }
.deck button { width: 7px; height: 73px; background: #e0e0e0; }
.deck button::before { content: ""; border: 4px solid transparent; border-right: 5px solid #333; border-left: 0; }

.findbar { display: flex; align-items: center; height: 47px; padding-left: 13px; }
.stop svg { width: 28px; height: 28px; stroke: none; }
.find { width: 249px; margin: 0 8px; }
.tri svg { width: 30px; height: 16px; color: #bbb; stroke-width: 1.500; }
.tri + .tri { margin-left: 15px; }
.all { color: #777; margin: 0 11px; font-size: 15px; }
.findbar label { display: flex; align-items: center; gap: 3px; margin-right: 7px; font-size: 17px; }
.findbar label input { appearance: none; margin: 0; width: 14px; height: 14px; background: #2c2c30; border-radius: 2px; }
.findbar label + .tool { margin-left: 16px; margin-bottom: 6px; }

.status {
    display: grid;
    grid-template-columns: 40px 179px 391px 244px 222px 1fr 38px 246px 209px 50px;
    height: 26px;
    border-top: 1px solid #777;
    font-size: 16px;
    color: #e4e4e4;
}
.status span { display: flex; align-items: center; justify-content: center; border-left: 1px solid #323232; }
.status .left { justify-content: flex-start; padding-left: 9px; }
.status .right { justify-content: flex-end; padding-right: 24px; }
.status svg { width: 24px; height: 22px; color: #e2251f; stroke-width: 1.500; margin-left: -12px; }
.status span:first-child { padding-left: 10px; border: 0; }
.selmode { width: 26px; height: 15px; border: 2px solid #1e8bcd; }
.status input { appearance: none; width: 163px; height: 16px; margin: 0; background: linear-gradient(#ccc, #ccc) center / 100% 2px no-repeat; }
.status input::-webkit-slider-thumb { appearance: none; width: 5px; height: 13px; background: #ccc; border: 1px solid #383838; border-width: 0 1px; }

.pointer { position: absolute; top: 170px; right: 205px; width: 344px; height: 96px; stroke: #188d98; }
.pointer .head { fill: #188d98; stroke: none; }
```
